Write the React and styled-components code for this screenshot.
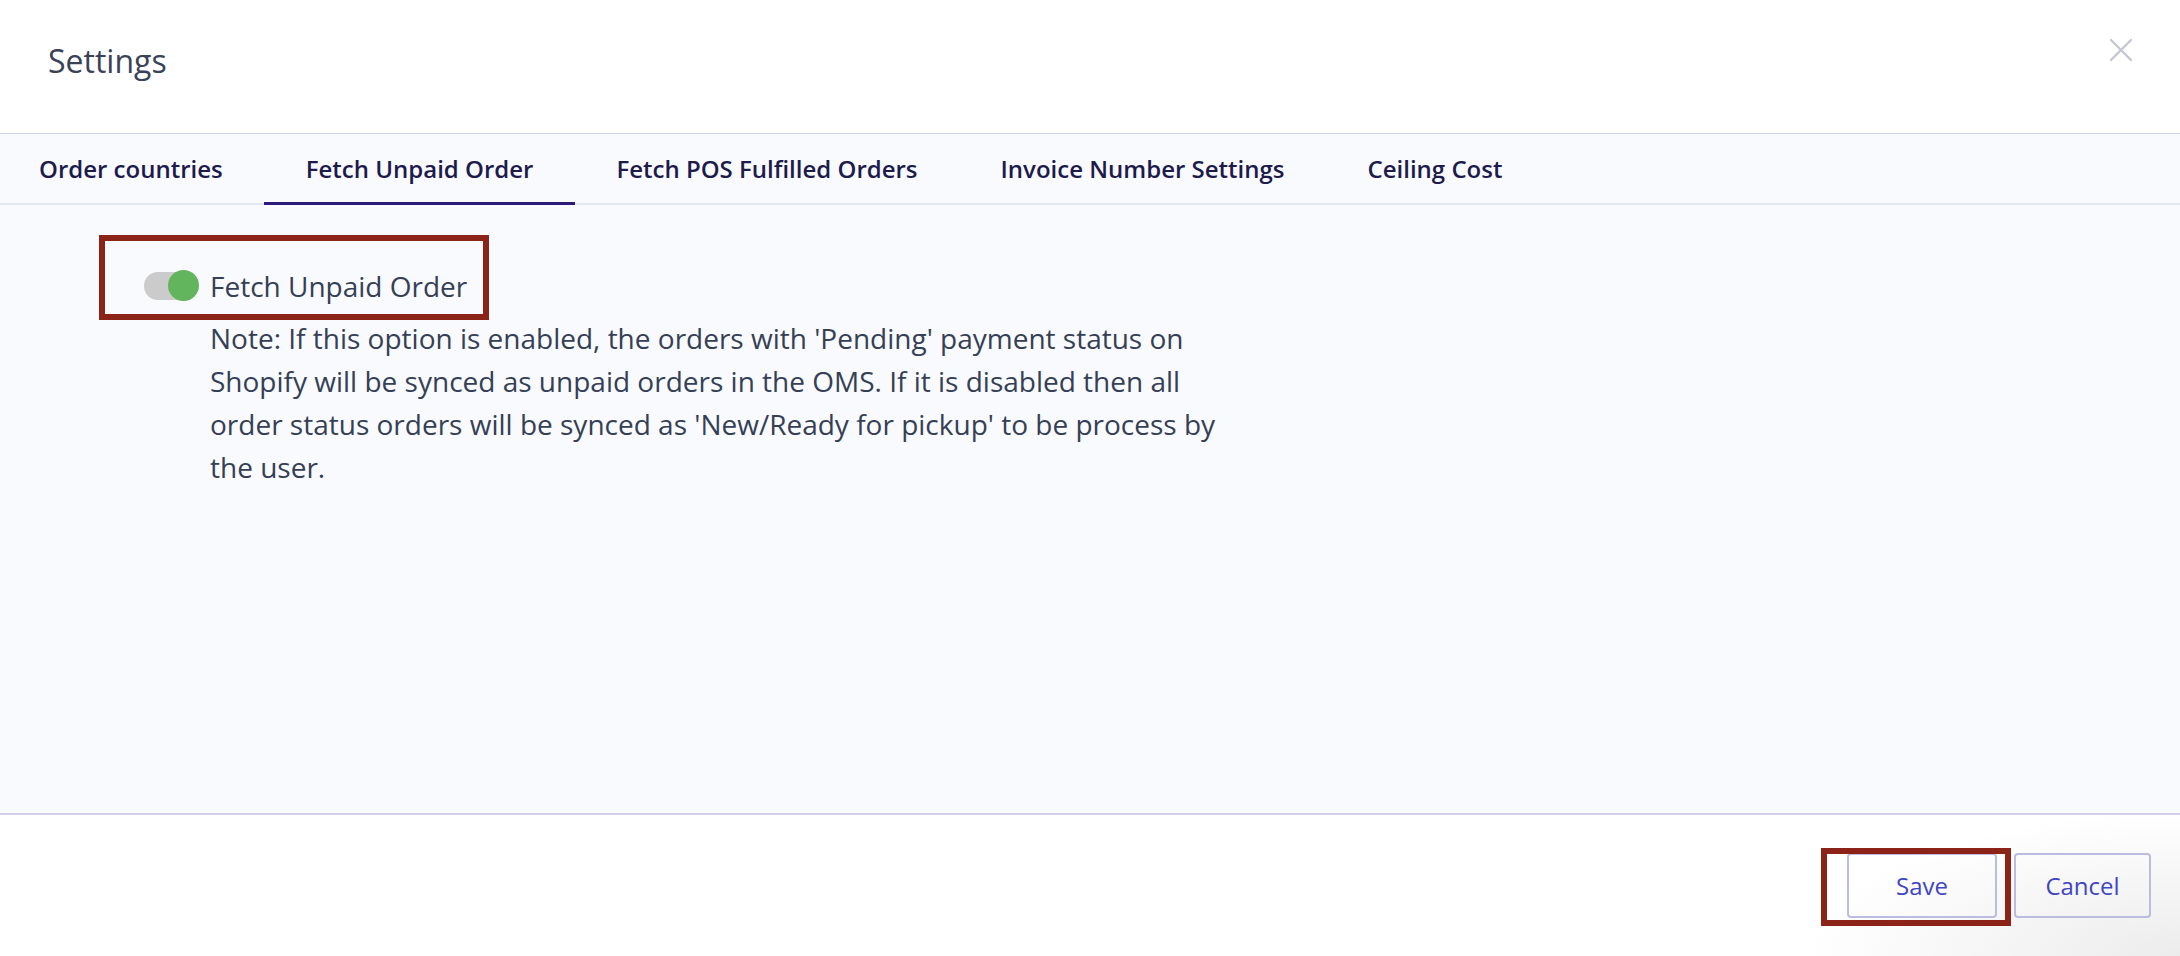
import React, { useState } from 'react';
import styled, { createGlobalStyle } from 'styled-components';

const GlobalStyle = createGlobalStyle`
  html, body {
    margin: 0;
    padding: 0;
    background: #ffffff;
  }
  body {
    font-family: 'Open Sans', 'Liberation Sans', sans-serif;
  }
  * {
    box-sizing: border-box;
  }
`;

const Modal = styled.div`
  width: 2180px;
  height: 956px;
  display: flex;
  flex-direction: column;
  background: #ffffff;
`;

const Header = styled.header`
  height: 134px;
  flex-shrink: 0;
  display: flex;
  align-items: center;
  justify-content: space-between;
  padding: 0 46px 12px 48px;
  border-bottom: 1px solid #d6d4ea;
`;

const Title = styled.h1`
  margin: 0;
  font-size: 32px;
  font-weight: 400;
  color: #3a4257;
`;

const CloseButton = styled.button`
  width: 26px;
  height: 26px;
  padding: 0;
  border: none;
  background: none;
  cursor: pointer;
  display: flex;
  align-items: center;
  justify-content: center;
  margin-bottom: 22px;
`;

const TabBar = styled.nav`
  height: 71px;
  flex-shrink: 0;
  display: flex;
  background: #f9fafd;
  border-bottom: 2px solid #e3e7ee;
`;

const Tab = styled.button`
  padding: 0 41.5px;
  margin-bottom: -2px;
  border: none;
  background: none;
  font-family: inherit;
  font-size: 24px;
  font-weight: 600;
  color: #1d1b4c;
  cursor: pointer;
  border-bottom: 3px solid ${(p) => (p.active ? '#2c1a7a' : 'transparent')};
  &:first-child {
    padding-left: 39px;
  }
`;

const Content = styled.section`
  flex: 1;
  background: #f9fafd;
  padding: 63px 0 0 144px;
`;

const Annotated = styled.div`
  position: relative;
  display: ${(p) => (p.inline ? 'inline-flex' : 'flex')};
  &::after {
    content: '';
    position: absolute;
    left: ${(p) => p.l}px;
    right: ${(p) => p.r}px;
    top: ${(p) => p.t}px;
    bottom: ${(p) => p.b}px;
    border: 6px solid #8c2318;
    pointer-events: none;
  }
`;

const ToggleRow = styled.label`
  display: flex;
  align-items: center;
  gap: 12px;
  cursor: pointer;
`;

const Track = styled.span`
  position: relative;
  width: 54px;
  height: 28px;
  border-radius: 14px;
  background: #cbcbcb;
  flex-shrink: 0;
`;

const Knob = styled.span`
  position: absolute;
  top: -2px;
  left: ${(p) => (p.on ? '24px' : '-2px')};
  width: 31px;
  height: 31px;
  border-radius: 50%;
  background: ${(p) => (p.on ? '#62b55c' : '#ffffff')};
`;

const ToggleLabel = styled.span`
  font-size: 28px;
  line-height: 36px;
  color: #353f56;
`;

const Note = styled.p`
  margin: 12px 0 0 66px;
  width: 1010px;
  font-size: 28px;
  line-height: 43px;
  color: #353f56;
`;

const Footer = styled.footer`
  height: 143px;
  flex-shrink: 0;
  display: flex;
  align-items: center;
  justify-content: flex-end;
  gap: 17px;
  padding: 0 29px 0 0;
  border-top: 2px solid #d3cfea;
  background: radial-gradient(ellipse 420px 160px at 100% 100%, #ececec, #ffffff 90%);
`;

const Button = styled.button`
  height: 65px;
  width: ${(p) => p.w}px;
  border: 2px solid #bcbce0;
  border-radius: 4px;
  background: transparent;
  font-family: inherit;
  font-size: 24px;
  color: #3f45c4;
  cursor: pointer;
`;

export default function App() {
  const [on, setOn] = useState(true);
  const tabs = [
    'Order countries',
    'Fetch Unpaid Order',
    'Fetch POS Fulfilled Orders',
    'Invoice Number Settings',
    'Ceiling Cost',
  ];

  return (
    <>
      <GlobalStyle />
      <Modal>
        <Header>
          <Title>Settings</Title>
          <CloseButton aria-label="Close">
            <svg width="24" height="24" viewBox="0 0 24 24">
              <path d="M2 2 L22 22 M22 2 L2 22" stroke="#c3c8d3" strokeWidth="2.4" strokeLinecap="round" />
            </svg>
          </CloseButton>
        </Header>

        <TabBar>
          {tabs.map((t, i) => (
            <Tab key={t} active={i === 1}>
              {t}
            </Tab>
          ))}
        </TabBar>

        <Content>
          <Annotated inline l={-45} r={-22} t={-33} b={-16}>
            <ToggleRow onClick={() => setOn(!on)}>
              <Track>
                <Knob on={on} />
              </Track>
              <ToggleLabel>Fetch Unpaid Order</ToggleLabel>
            </ToggleRow>
          </Annotated>
          <Note>
            Note: If this option is enabled, the orders with 'Pending' payment status on Shopify will be
            synced as unpaid orders in the OMS. If it is disabled then all order status orders will be
            synced as 'New/Ready for pickup' to be process by the user.
          </Note>
        </Content>

        <Footer>
          <Annotated l={-26} r={-14} t={-5} b={-8}>
            <Button w={150}>Save</Button>
          </Annotated>
          <Button w={137}>Cancel</Button>
        </Footer>
      </Modal>
    </>
  );
}
